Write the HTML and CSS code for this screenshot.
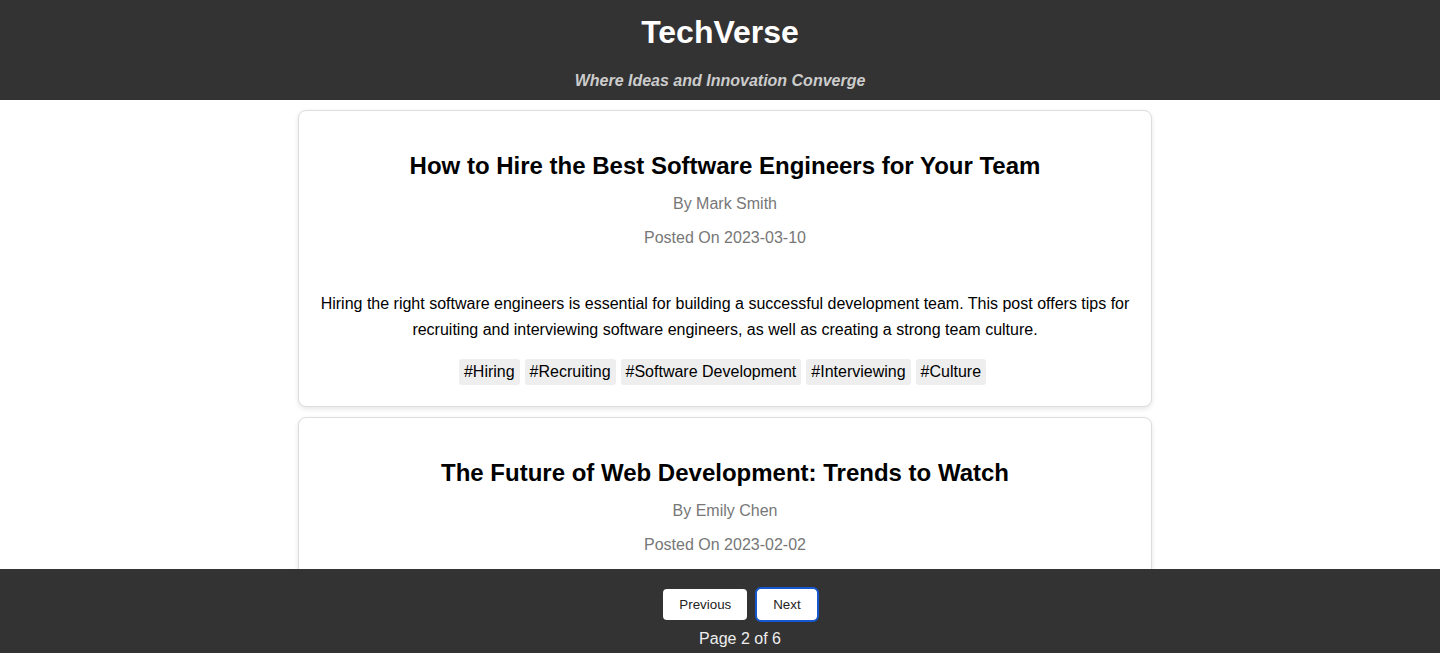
FILE: index.html
```html
<!DOCTYPE html>
<html lang="en">
<head>
<meta charset="utf-8">
<title>TechVerse</title>
<link rel="stylesheet" href="styles.css">
</head>
<body>
<header class="site-header">
  <h1 class="site-title">TechVerse</h1>
  <p class="site-tagline">Where Ideas and Innovation Converge</p>
</header>
<main class="posts">
  <article class="post-card">
    <h2 class="post-title">How to Hire the Best Software Engineers for Your Team</h2>
    <p class="post-meta">By Mark Smith</p>
    <p class="post-meta">Posted On 2023-03-10</p>
    <p class="post-body">Hiring the right software engineers is essential for building a successful development team. This post offers tips for recruiting and interviewing software engineers, as well as creating a strong team culture.</p>
    <div class="tags">
      <span class="tag">#Hiring</span>
      <span class="tag">#Recruiting</span>
      <span class="tag">#Software Development</span>
      <span class="tag">#Interviewing</span>
      <span class="tag">#Culture</span>
    </div>
  </article>
  <article class="post-card">
    <h2 class="post-title">The Future of Web Development: Trends to Watch</h2>
    <p class="post-meta">By Emily Chen</p>
    <p class="post-meta">Posted On 2023-02-02</p>
    <p class="post-body">Web development is evolving rapidly. This post explores the latest trends, from new frameworks to serverless architectures, and what they mean for developers.</p>
    <div class="tags">
      <span class="tag">#WebDev</span>
      <span class="tag">#Trends</span>
    </div>
  </article>
</main>
<footer class="pager">
  <div class="pager-buttons">
    <button class="pager-btn" type="button">Previous</button>
    <button class="pager-btn is-focused" type="button">Next</button>
  </div>
  <p class="pager-info">Page 2 of 6</p>
</footer>
</body>
</html>
```

FILE: styles.css
```css
* { box-sizing: border-box; }

html, body {
  margin: 0;
  padding: 0;
}

body {
  font-family: "Liberation Sans", Arial, sans-serif;
  background: #ffffff;
  color: #000;
  padding-bottom: 100px;
}

.site-header {
  background: #333333;
  text-align: center;
  padding: 14px 0 10px;
}

.site-title {
  margin: 0;
  font-size: 32px;
  font-weight: bold;
  color: #ffffff;
  line-height: 37px;
}

.site-tagline {
  margin: 21px 0 0;
  font-size: 16px;
  font-weight: bold;
  font-style: italic;
  color: #cccccc;
  line-height: 18px;
}

.posts {
  display: flex;
  flex-direction: column;
  align-items: center;
  gap: 10px;
  padding: 10px 0 0 10px;
}

.post-card {
  width: 854px;
  background: #fff;
  border: 1px solid #dddddd;
  border-radius: 8px;
  box-shadow: 0 2px 5px rgba(0, 0, 0, 0.1);
  padding: 41px 20px 21px;
  text-align: center;
}

.post-title {
  margin: 0 0 15px;
  font-size: 24px;
  font-weight: bold;
  line-height: 28px;
}

.post-meta {
  margin: 0 0 16px;
  font-size: 16px;
  line-height: 18px;
  color: #777777;
}

.post-meta + .post-body {
  margin-top: 44px;
}

.post-body {
  margin: 0 0 16px;
  font-size: 16px;
  line-height: 26px;
  color: #000;
}

.tags {
  display: flex;
  justify-content: center;
  flex-wrap: wrap;
}

.tag {
  background: #eeeeee;
  border-radius: 3px;
  padding: 4px 5px;
  margin-right: 5px;
  font-size: 16px;
  line-height: 18px;
  color: #000;
}

.pager {
  position: fixed;
  left: 0;
  right: 0;
  bottom: 0;
  height: 84px;
  background: #333333;
  padding: 20px 0 0 40px;
  text-align: center;
}

.pager-buttons {
  display: flex;
  justify-content: center;
  gap: 10px;
}

.pager-btn {
  font-family: "Liberation Sans", Arial, sans-serif;
  font-size: 13.333px;
  line-height: 15px;
  padding: 8px 16px;
  border: none;
  border-radius: 4px;
  background: #ffffff;
  color: #222;
}

.pager-btn.is-focused {
  outline: 2px solid #1558d0;
  outline-offset: 0;
  box-shadow: 0 0 0 1px #ffffff inset;
}

.pager-info {
  margin: 10px 0 0;
  font-size: 16px;
  line-height: 18px;
  color: #eeeeee;
}
```
